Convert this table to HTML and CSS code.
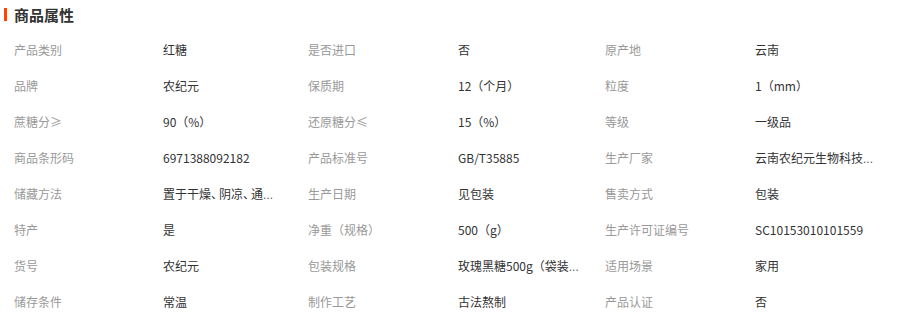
FILE: index.html
```html
<!DOCTYPE html>
<html lang="zh-CN">
<head>
<meta charset="utf-8">
<title>商品属性</title>
<link rel="stylesheet" href="styles.css">
</head>
<body>
<div class="attrs">
  <h2 class="attrs-title">商品属性</h2>
  <div class="attrs-grid">
    <div class="k">产品类别</div><div class="v">红糖</div>
    <div class="k">是否进口</div><div class="v">否</div>
    <div class="k">原产地</div><div class="v">云南</div>

    <div class="k">品牌</div><div class="v">农纪元</div>
    <div class="k">保质期</div><div class="v">12（个月）</div>
    <div class="k">粒度</div><div class="v">1（mm）</div>

    <div class="k">蔗糖分≥</div><div class="v">90（%）</div>
    <div class="k">还原糖分≤</div><div class="v">15（%）</div>
    <div class="k">等级</div><div class="v">一级品</div>

    <div class="k">商品条形码</div><div class="v">6971388092182</div>
    <div class="k">产品标准号</div><div class="v">GB/T35885</div>
    <div class="k">生产厂家</div><div class="v" title="云南农纪元生物科技有限公司">云南农纪元生物科技<span class="dots">...</span></div>

    <div class="k">储藏方法</div><div class="v" title="置于干燥、阴凉、通风处">置于干燥<span class="p">、</span>阴凉<span class="p">、</span>通<span class="dots">...</span></div>
    <div class="k">生产日期</div><div class="v">见包装</div>
    <div class="k">售卖方式</div><div class="v">包装</div>

    <div class="k">特产</div><div class="v">是</div>
    <div class="k">净重（规格）</div><div class="v">500（g）</div>
    <div class="k">生产许可证编号</div><div class="v">SC10153010101559</div>

    <div class="k">货号</div><div class="v">农纪元</div>
    <div class="k">包装规格</div><div class="v" title="玫瑰黑糖500g（袋装）">玫瑰黑糖500g（袋装<span class="dots">...</span></div>
    <div class="k">适用场景</div><div class="v">家用</div>

    <div class="k">储存条件</div><div class="v">常温</div>
    <div class="k">制作工艺</div><div class="v">古法熬制</div>
    <div class="k">产品认证</div><div class="v">否</div>
  </div>
</div>
</body>
</html>
```
FILE: styles.css
```css
html, body {
  margin: 0;
  padding: 0;
  background: #fff;
}
body {
  font-family: "Noto Sans CJK SC", "Liberation Sans", sans-serif;
  font-size: 12px;
  color: #333;
}
.attrs {
  padding: 0 0 0 4px;
}
.attrs-title {
  margin: 8px 0 0 0;
  padding: 0 0 0 7px;
  border-left: 3px solid #ff4400;
  height: 13px;
  line-height: 13px;
  font-size: 15px;
  font-weight: bold;
  color: #333;
}
.attrs-grid {
  display: grid;
  grid-template-columns: 149px 145px 150px 147px 150px 1fr;
  grid-auto-rows: 36px;
  margin-top: 11px;
  padding-left: 10px;
}
.k, .v {
  line-height: 36px;
  white-space: nowrap;
}
.k {
  color: #999;
}
.v {
  color: #333;
}
.p {
  letter-spacing: -5px;
  margin-right: 1px;
}
.dots {
  font-family: "Liberation Sans", sans-serif;
  font-size: 12px;
  color: #555;
}
```
